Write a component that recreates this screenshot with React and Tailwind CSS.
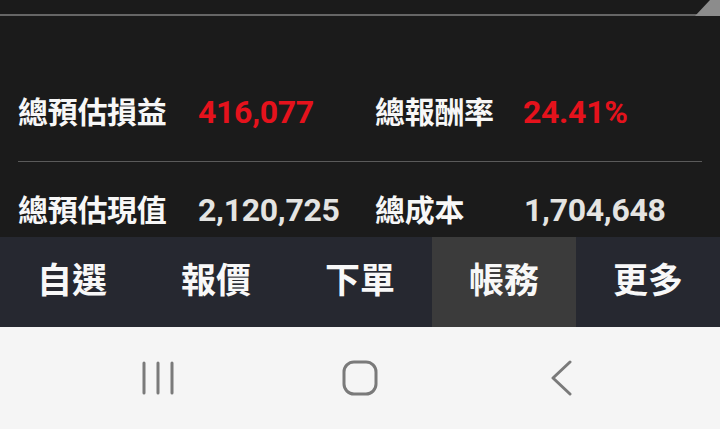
import React from "react";

const font = { fontFamily: 'Roboto, "Noto Sans CJK TC", sans-serif' };

const rows = [
  [
    { label: "總預估損益", value: "416,077", red: true },
    { label: "總報酬率", value: "24.41%", red: true },
  ],
  [
    { label: "總預估現值", value: "2,120,725" },
    { label: "總成本", value: "1,704,648" },
  ],
];

const tabs = ["自選", "報價", "下單", "帳務", "更多"];

const Stat = ({ label, value, red, valueX }) => (
  <div className="flex items-baseline">
    <span className={`font-bold text-[30px] text-[#f7f7f7] tracking-[-0.3px] ${valueX}`}>
      {label}
    </span>
    <span
      className={`font-bold text-[32px] tracking-[-0.3px] ${
        red ? "text-[#e5121c]" : "text-[#e4e4e2]"
      }`}
    >
      {value}
    </span>
  </div>
);

const NavBar = () => (
  <div className="h-[102px] bg-[#f5f5f5] flex items-center justify-center">
    <div className="w-[202px] flex justify-center">
      <svg width="34" height="34" viewBox="0 0 34 34">
        <g stroke="#7a7a7a" strokeWidth="3" strokeLinecap="round">
          <line x1="3" y1="2" x2="3" y2="32" />
          <line x1="17" y1="2" x2="17" y2="32" />
          <line x1="31" y1="2" x2="31" y2="32" />
        </g>
      </svg>
    </div>
    <div className="w-[202px] flex justify-center">
      <svg width="36" height="36" viewBox="0 0 36 36">
        <rect x="2" y="2" width="32" height="32" rx="10" fill="none" stroke="#7a7a7a" strokeWidth="3" />
      </svg>
    </div>
    <div className="w-[202px] flex justify-center">
      <svg width="24" height="36" viewBox="0 0 24 36">
        <polyline points="20,2 3,18 20,34" fill="none" stroke="#7a7a7a" strokeWidth="3" strokeLinecap="round" strokeLinejoin="round" />
      </svg>
    </div>
  </div>
);

export default function App() {
  return (
    <div className="w-[720px] h-[429px] overflow-hidden bg-[#1b1b1b]" style={font}>
      <div className="relative h-[16px] border-b-2 border-[#666666]">
        <svg className="absolute right-0 top-0" width="30" height="16" viewBox="0 0 30 16">
          <polygon points="5,16 20,0 30,0 30,16" fill="#8c8c8c" />
        </svg>
      </div>
      <div className="h-[221px] overflow-hidden px-[18px] flex flex-col">
        <div className="h-[90px] mt-[51px] flex items-center shrink-0">
          <div className="w-[357px]">
            <Stat {...rows[0][0]} valueX="w-[180px]" />
          </div>
          <Stat {...rows[0][1]} valueX="w-[148px]" />
        </div>
        <div className="mt-[4px] h-px bg-[#5a5a5a] shrink-0" />
        <div className="h-[96px] flex items-center shrink-0">
          <div className="w-[357px]">
            <Stat {...rows[1][0]} valueX="w-[180px]" />
          </div>
          <Stat {...rows[1][1]} valueX="w-[149px]" />
        </div>
      </div>
      <div className="h-[90px] bg-[#262830] grid grid-cols-5">
        {tabs.map((t, i) => (
          <div
            key={t}
            className={`flex items-center justify-center text-[35px] font-bold text-[#f8f8f8] ${
              i === 3 ? "bg-[#3b3b3b]" : ""
            }`}
          >
            {t}
          </div>
        ))}
      </div>
      <NavBar />
    </div>
  );
}
